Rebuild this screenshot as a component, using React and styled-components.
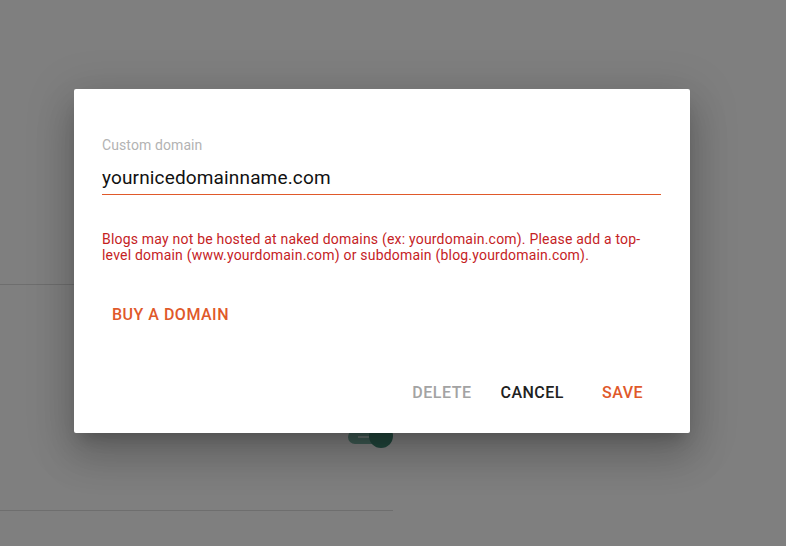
import React from 'react';
import styled, { createGlobalStyle } from 'styled-components';

const GlobalStyle = createGlobalStyle`
  html, body {
    margin: 0;
    padding: 0;
    background: #ffffff;
    font-family: Roboto, "Liberation Sans", Arial, sans-serif;
  }
`;

const Page = styled.div`
  width: 786px;
  height: 546px;
  position: relative;
  overflow: hidden;
  background: #fff;
`;

const Settings = styled.div`
  width: 393px;
  padding-top: 284px;
`;

const Divider = styled.div`
  height: 1px;
  background: #dcdcdc;
`;

const SettingRow = styled.div`
  height: 225px;
  display: flex;
  justify-content: flex-end;
  align-items: flex-start;
  padding-top: 140px;
  box-sizing: border-box;
`;

const Toggle = styled.div`
  position: relative;
  width: 45px;
  height: 24px;
  display: flex;
  align-items: center;
  .track {
    width: 36px;
    height: 14px;
    border-radius: 7px;
    background: #7db7a8;
    position: relative;
  }
  .track::before {
    content: '';
    position: absolute;
    left: 10px;
    top: 6px;
    width: 11px;
    height: 1.5px;
    background: #c9e3dc;
  }
  .thumb {
    position: absolute;
    right: 0;
    top: -1px;
    width: 24px;
    height: 24px;
    border-radius: 50%;
    background: #448f7b;
  }
`;

const Overlay = styled.div`
  position: absolute;
  inset: 0;
  background: rgba(0, 0, 0, 0.5);
  padding: 89px 0 0 74px;
  box-sizing: border-box;
`;

const Dialog = styled.div`
  width: 616px;
  height: 344px;
  box-sizing: border-box;
  background: #fff;
  border-radius: 2px;
  display: flex;
  flex-direction: column;
  box-shadow: 0 11px 15px -7px rgba(0, 0, 0, 0.2),
    0 24px 38px 3px rgba(0, 0, 0, 0.14), 0 9px 46px 8px rgba(0, 0, 0, 0.12);
`;

const Body = styled.div`
  padding: 47px 29px 0 28px;
  flex: 1;
`;

const Label = styled.label`
  display: block;
  font-size: 14px;
  line-height: 18px;
  letter-spacing: 0.1px;
  color: #b3b3b3;
`;

const Field = styled.div`
  margin-top: 6px;
  border-bottom: 1px solid #e0592a;
  padding: 7px 0 5px;
`;

const Input = styled.input`
  display: block;
  width: 100%;
  box-sizing: border-box;
  border: none;
  outline: none;
  padding: 0;
  font-family: inherit;
  font-size: 19px;
  line-height: 22px;
  letter-spacing: 0.15px;
  color: #111;
  background: transparent;
`;

const ErrorText = styled.p`
  margin: 36px 0 0;
  font-size: 14px;
  line-height: 16px;
  letter-spacing: 0.2px;
  color: #c5221f;
`;

const TextButton = styled.button`
  border: none;
  background: transparent;
  font-family: inherit;
  font-size: 16px;
  font-weight: 500;
  letter-spacing: 0.5px;
  text-transform: uppercase;
  height: 36px;
  padding: 0 10px;
  cursor: pointer;
  color: ${(p) =>
    p.$tone === 'accent' ? '#e0592a' : p.$tone === 'muted' ? '#a3a3a3' : '#212121'};
`;

const BuyButton = styled(TextButton)`
  margin: 33px 0 0 0;
`;

const Footer = styled.div`
  display: flex;
  justify-content: flex-end;
  align-items: center;
  padding: 0 33px 23px 0;
  gap: 1px;
  & > button {
    padding: 0 14px;
  }
  & > button:last-child {
    margin-left: 9px;
  }
`;

export default function App() {
  return (
    <Page>
      <GlobalStyle />
      <Settings>
        <Divider />
        <SettingRow>
          <Toggle>
            <div className="track" />
            <div className="thumb" />
          </Toggle>
        </SettingRow>
        <Divider />
      </Settings>
      <Overlay>
        <Dialog>
          <Body>
            <Label htmlFor="domain">Custom domain</Label>
            <Field>
              <Input id="domain" defaultValue="yournicedomainname.com" />
            </Field>
            <ErrorText>
              Blogs may not be hosted at naked domains (ex: yourdomain.com). Please add a top-level
              domain (www.yourdomain.com) or subdomain (blog.yourdomain.com).
            </ErrorText>
            <BuyButton $tone="accent">Buy a domain</BuyButton>
          </Body>
          <Footer>
            <TextButton $tone="muted">Delete</TextButton>
            <TextButton>Cancel</TextButton>
            <TextButton $tone="accent">Save</TextButton>
          </Footer>
        </Dialog>
      </Overlay>
    </Page>
  );
}
